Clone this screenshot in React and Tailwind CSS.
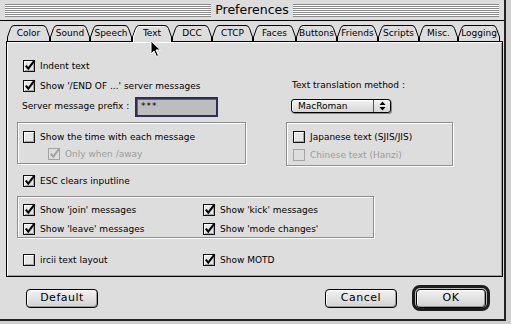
import React from 'react';

const tabs = [
  { label: 'Color', w: 43 },
  { label: 'Sound', w: 40 },
  { label: 'Speech', w: 42 },
  { label: 'Text', w: 40, active: true },
  { label: 'DCC', w: 40 },
  { label: 'CTCP', w: 41 },
  { label: 'Faces', w: 43 },
  { label: 'Buttons', w: 41 },
  { label: 'Friends', w: 41 },
  { label: 'Scripts', w: 41 },
  { label: 'Misc.', w: 39 },
  { label: 'Logging', w: 42 },
];

const stripes =
  'bg-[repeating-linear-gradient(to_bottom,#8a8a8a_0px,#8a8a8a_1px,#ffffff_1px,#ffffff_2px)]';

function Tab({ label, w, active }) {
  const d = `M0.5 17V12L3.5 3.5Q4.5 0.5 7 0.5H${w - 7}Q${w - 4.5} 0.5 ${w - 3.5} 3.5L${w - 0.5} 12V17`;
  return (
    <div
      className={`relative h-[17px] shrink-0 ${active ? 'z-10' : 'z-0'}`}
      style={{ width: w }}
    >
      <svg width={w} height="17" className="absolute inset-0">
        <path d={d} fill="#dddddd" stroke="#000" />
        {active && <path d={`M1.5 17V12L4.5 4Q5.5 1.5 7 1.5H${w - 8}`} stroke="#fff" fill="none" />}
      </svg>
      <span className="relative flex h-[16px] items-center justify-center pt-[1px] text-[9px] text-black">
        {label}
      </span>
    </div>
  );
}

function Check({ on, disabled, label }) {
  const edge = disabled ? '#a3a3a3' : '#111';
  return (
    <div className="flex h-[12px] items-center gap-[4px]">
      <svg width="13" height="12" viewBox="0 0 13 12" className="shrink-0 overflow-visible">
        <rect x="0.5" y="0.5" width="11" height="11" fill={disabled ? '#dddddd' : '#e6e6e6'} stroke={edge} />
        {!disabled && <path d="M1.5 10V1.5H10" stroke="#fff" fill="none" />}
        {!disabled && <path d="M2 10.5H10.5V2" stroke="#a6a6a6" fill="none" />}
        {on && (
          <path
            d="M2.8 5.6L5.3 8.6L11.6 0.4"
            stroke={disabled ? '#a3a3a3' : '#000'}
            strokeWidth="2.1"
            fill="none"
          />
        )}
      </svg>
      <span className={`text-[9px] leading-[12px] ${disabled ? 'text-[#9c9c9c]' : 'text-black'}`}>{label}</span>
    </div>
  );
}

function Group({ className, children }) {
  return (
    <div
      className={`border border-[#8e8e8e] shadow-[inset_1px_1px_0_#ffffff,1px_1px_0_#ffffff] ${className}`}
    >
      {children}
    </div>
  );
}

function Button({ label, className }) {
  return (
    <div
      className={`flex h-[19px] items-center justify-center rounded-[4px] border border-black bg-[linear-gradient(#f2f2f2,#d2d2d2)] text-[11px] tracking-[0.5px] text-black shadow-[inset_1px_1px_0_#ffffff,inset_-1px_-1px_0_#9a9a9a] ${className}`}
    >
      {label}
    </div>
  );
}

export default function App() {
  return (
    <div className="relative h-[324px] w-[511px] overflow-hidden bg-[#cfcfcf] font-['DejaVu_Sans',sans-serif]">
      <div className="h-[321px] w-[506px] border-r-2 border-b-2 border-[#222] bg-[#dddddd]">
        {/* title bar */}
        <div className="flex h-[21px] items-center border-b border-black px-[5px]">
          <div className={`h-[13px] flex-1 ${stripes}`} />
          <div className="px-[4px] text-[12.5px] leading-[14px] text-black">Preferences</div>
          <div className={`h-[13px] flex-1 ${stripes}`} />
        </div>

        <div className="pl-[6px] pr-[1px] pt-[4px]">
          {/* tabs */}
          <div className="relative -mb-[1px] flex pl-[1px]">
            {tabs.map((t) => (
              <Tab key={t.label} {...t} />
            ))}
          </div>

          {/* tab panel */}
          <div className="relative h-[236px] w-[497px] border border-black bg-[#dddddd] pl-[10px] shadow-[inset_1px_1px_0_#ffffff,inset_-1px_-1px_0_#a0a0a0]">
            <div className="flex">
              <div className="w-[229px] pt-[18px]">
                <div className="ml-[6px]">
                  <Check on label="Indent text" />
                </div>
                <div className="ml-[6px] mt-[8px]">
                  <Check on label="Show '/END OF ...' server messages" />
                </div>
                <div className="mt-[5px] flex h-[20px] items-center">
                  <span className="ml-[5px] w-[113px] text-[9px] text-black">Server message prefix :</span>
                  <div className="flex h-[20px] w-[83px] items-center border-2 border-[#2e2e58] bg-[#bdbdbd] pl-[4px] shadow-[inset_1px_1px_0_#666]">
                    <span className="text-[9px] tracking-[1px] text-black">***</span>
                  </div>
                </div>
                <Group className="mt-[5px] h-[42px] pl-[5px] pt-[8px]">
                  <Check label="Show the time with each message" />
                  <div className="ml-[25px] mt-[5px]">
                    <Check on disabled label="Only when /away" />
                  </div>
                </Group>
              </div>

              <div className="ml-[40px] w-[167px] pt-[37px]">
                <div className="ml-[6px] h-[12px] text-[9px] leading-[12px] text-black">
                  Text translation method :
                </div>
                <div className="ml-[5px] mt-[8px] flex h-[14px] w-[100px] items-center rounded-[3px] border border-black bg-[linear-gradient(#f4f4f4,#d6d6d6)] shadow-[1px_1px_0_#8a8a8a,inset_1px_1px_0_#ffffff]">
                  <span className="w-[81px] pl-[6px] text-[9px] leading-[12px] text-black">MacRoman</span>
                  <div className="flex h-full flex-1 items-center justify-center border-l border-[#555]">
                    <svg width="7" height="10" viewBox="0 0 7 10">
                      <path d="M3.5 0.5L6.5 4H0.5Z" fill="#000" />
                      <path d="M0.5 6H6.5L3.5 9.5Z" fill="#000" />
                    </svg>
                  </div>
                </div>
                <Group className="mt-[9px] h-[44px] pl-[6px] pt-[8px]">
                  <Check label="Japanese text (SJIS/JIS)" />
                  <div className="mt-[6px]">
                    <Check disabled label="Chinese text (Hanzi)" />
                  </div>
                </Group>
              </div>
            </div>

            <div className="ml-[6px] mt-[9px]">
              <Check on label="ESC clears inputline" />
            </div>

            <Group className="mt-[9px] grid h-[42px] w-[357px] grid-cols-[180px_1fr] gap-y-[5px] pl-[5px] pt-[7px]">
              <Check on label="Show 'join' messages" />
              <Check on label="Show 'kick' messages" />
              <Check on label="Show 'leave' messages" />
              <Check on label="Show 'mode changes'" />
            </Group>

            <div className="mt-[16px] grid grid-cols-[180px_1fr] pl-[6px]">
              <Check label="ircii text layout" />
              <Check on label="Show MOTD" />
            </div>
          </div>

          {/* buttons */}
          <div className="mt-[8px] flex items-center">
            <Button label="Default" className="ml-[20px] w-[72px]" />
            <Button label="Cancel" className="ml-[227px] w-[72px]" />
            <div className="ml-[15px] flex h-[26px] w-[78px] items-center justify-center rounded-[8px] border-[3px] border-[#1c1c1c] bg-[#bcbcbc]">
              <Button label="OK" className="w-[70px]" />
            </div>
          </div>
        </div>
      </div>

      {/* mouse pointer */}
      <svg width="12" height="18" viewBox="0 0 12 18" className="absolute left-[150px] top-[40px]">
        <path d="M1 1V14L4 11L6.5 16.5L8.5 15.5L6 10H10.5Z" fill="#000" stroke="#fff" strokeWidth="1" />
      </svg>
    </div>
  );
}
